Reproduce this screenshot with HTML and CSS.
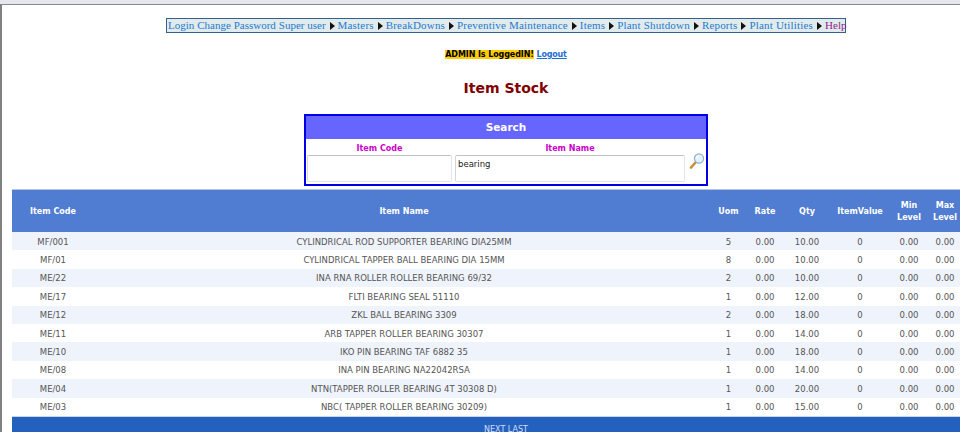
FILE: index.html
```html
<!DOCTYPE html>
<html>
<head>
    <meta charset="UTF-8">
    <title>Item Stock</title>
    <link rel="stylesheet" href="styles.css">
</head>
<body>
<div class="page">
    <div class="menu-wrap">
        <ul class="menu">
            <li class="tight"><a href="#">Login</a></li>
            <li class="tight"><a href="#">Change Password</a></li>
            <li class="sub tight"><a href="#">Super user</a></li>
            <li class="sub"><a href="#">Masters</a></li>
            <li class="sub"><a href="#">BreakDowns</a></li>
            <li class="sub"><a href="#">Preventive Maintenance</a></li>
            <li class="sub"><a href="#">Items</a></li>
            <li class="sub"><a href="#">Plant Shutdown</a></li>
            <li class="sub"><a href="#">Reports</a></li>
            <li class="sub"><a href="#">Plant Utilities</a></li>
            <li class="tight"><a href="#" class="visited">Help</a></li>
        </ul>
    </div>

    <div class="login-line">
        <span class="who">ADMIN Is LoggedIN!</span> <a href="#">Logout</a>
    </div>

    <h1>Item Stock</h1>

    <form class="search" action="?">
        <div class="search-title">Search</div>
        <div class="search-fields">
            <label class="field-code">Item Code
                <input type="text" name="itemCode">
            </label>
            <label class="field-name">Item Name
                <textarea name="itemName">bearing</textarea>
            </label>
            <svg class="go" width="17" height="17" viewBox="0 0 17 17">
                <path d="M7.5 9.5 L3 14.5" stroke="#d08a30" stroke-width="2.6" stroke-linecap="round"/>
                <circle cx="11" cy="5.5" r="4.6" fill="#e2f1fb" stroke="#8fb2cc" stroke-width="1.2"/>
                <path d="M8.5 5 A2.8 2.8 0 0 1 11 2.8" fill="none" stroke="#fff" stroke-width="1.2"/>
            </svg>
        </div>
    </form>

    <table class="grid">
        <thead>
            <tr>
                <th class="c-code">Item Code</th>
                <th class="c-name">Item Name</th>
                <th class="c-uom">Uom</th>
                <th class="c-rate">Rate</th>
                <th class="c-qty">Qty</th>
                <th class="c-val">ItemValue</th>
                <th class="c-min">Min Level</th>
                <th class="c-max">Max Level</th>
            </tr>
        </thead>
        <tbody>
            <tr><td>MF/001</td><td>CYLINDRICAL ROD SUPPORTER BEARING DIA25MM</td><td>5</td><td>0.00</td><td>10.00</td><td>0</td><td>0.00</td><td>0.00</td></tr>
            <tr><td>MF/01</td><td>CYLINDRICAL TAPPER BALL BEARING DIA 15MM</td><td>8</td><td>0.00</td><td>10.00</td><td>0</td><td>0.00</td><td>0.00</td></tr>
            <tr><td>ME/22</td><td>INA RNA ROLLER ROLLER BEARING 69/32</td><td>2</td><td>0.00</td><td>10.00</td><td>0</td><td>0.00</td><td>0.00</td></tr>
            <tr><td>ME/17</td><td>FLTI BEARING SEAL 51110</td><td>1</td><td>0.00</td><td>12.00</td><td>0</td><td>0.00</td><td>0.00</td></tr>
            <tr><td>ME/12</td><td>ZKL BALL BEARING 3309</td><td>2</td><td>0.00</td><td>18.00</td><td>0</td><td>0.00</td><td>0.00</td></tr>
            <tr><td>ME/11</td><td>ARB TAPPER ROLLER BEARING 30307</td><td>1</td><td>0.00</td><td>14.00</td><td>0</td><td>0.00</td><td>0.00</td></tr>
            <tr><td>ME/10</td><td>IKO PIN BEARING TAF 6882 35</td><td>1</td><td>0.00</td><td>18.00</td><td>0</td><td>0.00</td><td>0.00</td></tr>
            <tr><td>ME/08</td><td>INA PIN BEARING NA22042RSA</td><td>1</td><td>0.00</td><td>14.00</td><td>0</td><td>0.00</td><td>0.00</td></tr>
            <tr><td>ME/04</td><td>NTN(TAPPER ROLLER BEARING 4T 30308 D)</td><td>1</td><td>0.00</td><td>20.00</td><td>0</td><td>0.00</td><td>0.00</td></tr>
            <tr><td>ME/03</td><td>NBC( TAPPER ROLLER BEARING 30209)</td><td>1</td><td>0.00</td><td>15.00</td><td>0</td><td>0.00</td><td>0.00</td></tr>
        </tbody>
        <tfoot>
            <tr><td colspan="8"><a href="#">NEXT</a> <a href="#">LAST</a></td></tr>
        </tfoot>
    </table>
</div>
</body>
</html>
```

FILE: styles.css
```css
/* page */
html {
    height: 432px;
    overflow: hidden;
    background-color: #e4e6f0;
}
body {
    box-sizing: border-box;
    margin: 4px 0 0;
    height: 428px;
    overflow: hidden;
    background-color: #fff;
    border-top: 1px solid #8a8a8a;
    border-left: 2px solid #808080;
    font-family: "DejaVu Sans", Verdana, sans-serif;
}
.page {
    width: 988px;
    margin-left: 10px;
}

/* top menu */
.menu-wrap {
    display: flex;
    justify-content: center;
    padding-top: 13px;
}
.menu {
    display: flex;
    gap: 3px;
    list-style: none;
    margin: 0;
    padding: 0 0 0 1px;
    width: 677px;
    height: 13px;
    border: 1px solid #35608c;
    background-color: #e1ebeb;
    font-family: "Liberation Serif", serif;
    font-size: 11px;
    line-height: 13px;
    white-space: nowrap;
    letter-spacing: 0.19px;
}
.menu .tight {
    letter-spacing: 0;
}
.menu a {
    color: #1f7ad1;
    text-decoration: none;
}
.menu a.visited {
    color: #8d1f8d;
}
.menu .sub::after {
    content: "";
    display: inline-block;
    margin-left: 4px;
    border-left: 5px solid #111;
    border-top: 4px solid transparent;
    border-bottom: 4px solid transparent;
    vertical-align: -1px;
}

/* logged in line */
.login-line {
    margin-top: 15px;
    text-align: center;
    font-size: 8px;
    font-weight: bold;
    line-height: 13px;
    height: 13px;
}
.login-line .who {
    background-color: #ffcc00;
    color: #000;
    letter-spacing: -0.1px;
}
.login-line a {
    color: #1f6fd1;
    letter-spacing: -0.2px;
}

h1 {
    margin: 16px 0 0;
    text-align: center;
    color: #800000;
    font-size: 14px;
    line-height: 22px;
    font-weight: bold;
}

/* search box */
.search {
    box-sizing: border-box;
    width: 404px;
    height: 72px;
    margin: 15px auto 0;
    border: 2px solid #0000e6;
    background-color: #fff;
}
.search-title {
    height: 23px;
    margin-bottom: 2px;
    background-color: #6666ff;
    color: #fff;
    font-size: 10.5px;
    font-weight: bold;
    line-height: 23px;
    text-align: center;
}
.search-fields {
    display: flex;
    align-items: flex-start;
    padding-left: 1px;
    gap: 3px;
}
.search label {
    display: flex;
    flex-direction: column;
    align-items: center;
    padding-top: 2px;
    color: #cc00cc;
    font-size: 8px;
    font-weight: bold;
    line-height: 12px;
}
.search input, .search textarea {
    box-sizing: border-box;
    display: block;
    margin: 0;
    height: 27px;
    padding: 2px;
    border: 1px solid #e4e4ec;
    border-top-color: #c0c0cc;
    border-left-color: #d4d4dc;
    border-radius: 2px;
    font-family: "DejaVu Sans", Verdana, sans-serif;
    font-size: 8.5px;
    line-height: 12px;
    resize: none;
    overflow: hidden;
    background: #fff;
    color: #222;
}
.field-code input {
    width: 145px;
}
.field-name textarea {
    width: 230px;
}
.go {
    margin-top: 12px;
}

/* results */
.grid {
    table-layout: fixed;
    border-collapse: collapse;
    width: 953px;
    margin-top: 3px;
    border-top: 1px solid #b4c4e4;
    font-size: 8.5px;
    color: #555;
    text-align: center;
}
.grid th {
    height: 40px;
    padding: 2px 0 0;
    background-color: #507cd1;
    color: #fff;
    font-size: 8px;
    font-weight: bold;
    line-height: 12px;
}
.grid td {
    height: 17.4px;
    padding: 1px 0 0;
}
.grid tbody tr:nth-child(odd) {
    background-color: #eff3fb;
}
.grid tfoot td {
    height: 18px;
    padding: 4px 0 0 35px;
    background-color: #2461bf;
    border-top: 1px solid #c8d4e8;
    font-size: 8px;
}
.grid tfoot a {
    color: #d0def5;
    text-decoration: none;
}
.c-code { width: 82px; }
.c-name { width: 620px; }
.c-uom { width: 29px; }
.c-rate { width: 44px; }
.c-qty { width: 40px; }
.c-val { width: 66px; }
.c-min { width: 32px; }
.c-max { width: 40px; }
```
